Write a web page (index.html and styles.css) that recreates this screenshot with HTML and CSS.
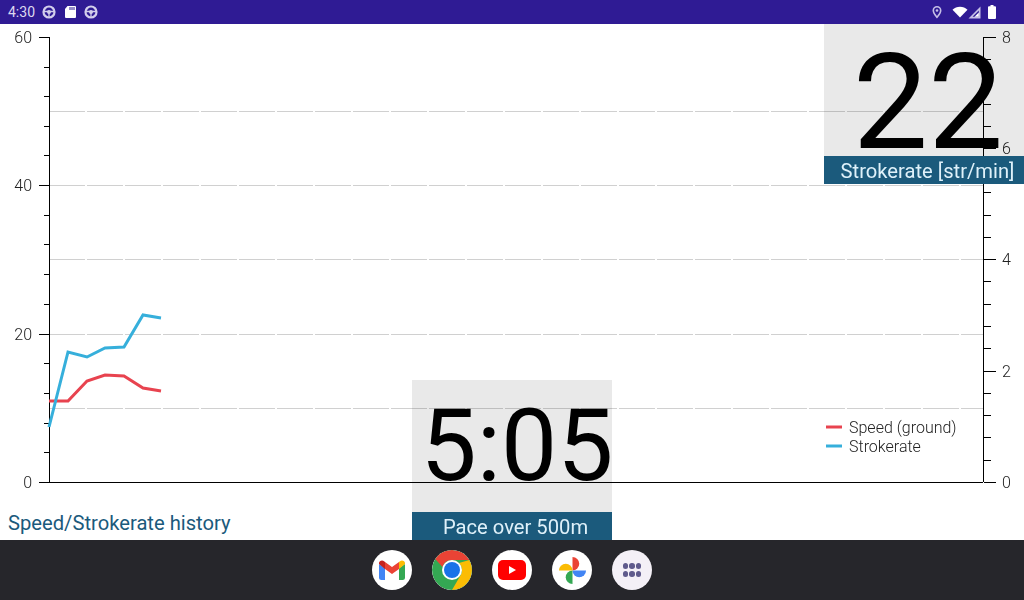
FILE: index.html
```html
<!DOCTYPE html>
<html lang="en">

<head>
	<meta charset="UTF-8">
	<title>Speed/Strokerate history</title>
	<link rel="stylesheet" href="styles.css">
</head>

<body>
	<div class="status">
		<div class="status-left">
			<span class="clock">4:30</span>
			<svg class="sicon" width="14" height="14" viewBox="0 0 14 14"><circle cx="7" cy="7" r="5.500" fill="none" stroke="#d3cfec" stroke-width="2.200"/><circle cx="7" cy="7" r="2" fill="#d3cfec"/><path d="M1 6.500h12M7 7v6" stroke="#d3cfec" stroke-width="1.300"/></svg>
			<svg class="sicon" width="14" height="14" viewBox="0 0 14 14"><path d="M4.500 1H12a1 1 0 0 1 1 1v10a1 1 0 0 1-1 1H3a1 1 0 0 1-1-1V4z" fill="#fff"/><path d="M7 2v3M9 2v3M11 2v3" stroke="#2f1b94" stroke-width="1"/></svg>
			<svg class="sicon" width="14" height="14" viewBox="0 0 14 14"><circle cx="7" cy="7" r="5.500" fill="none" stroke="#d3cfec" stroke-width="2.200"/><circle cx="7" cy="7" r="2" fill="#d3cfec"/><path d="M1 6.500h12M7 7v6" stroke="#d3cfec" stroke-width="1.300"/></svg>
		</div>
		<div class="status-right">
			<svg class="pin" width="10" height="14" viewBox="1 0 10 14"><path fill-rule="evenodd" d="M6 1a4.500 4.500 0 0 0-4.500 4.500C1.500 8.800 6 13.500 6 13.500s4.500-4.700 4.500-8A4.500 4.500 0 0 0 6 1zm0 1.600a2.900 2.900 0 0 1 2.900 2.900C8.900 7.300 7.100 9.700 6 11 4.900 9.700 3.100 7.300 3.100 5.500A2.900 2.900 0 0 1 6 2.600z" fill="#c5bfe6"/><circle cx="6" cy="5.500" r="1.300" fill="#c5bfe6"/></svg>
			<svg class="wifi" width="16" height="12" viewBox="0 0 15 12"><path d="M0 3.800C2 1.800 4.600 .7 7.500 .7s5.500 1.100 7.500 3.100L7.500 11.500z" fill="#fff"/></svg>
			<svg class="signal" width="13" height="13" viewBox="0 0 13 13"><path d="M12.500 .5v12H.5z" fill="#c5bfe6"/><path d="M10.800 4.600v6.200H4.600z" fill="#2f1b94"/><path d="M10.800 6.500v4.300H6.500z" fill="#fff"/></svg>
			<svg class="battery" width="8" height="14" viewBox="0 0 8 14"><path d="M2.500 0h3v1.300H7a1 1 0 0 1 1 1V13a1 1 0 0 1-1 1H1a1 1 0 0 1-1-1V2.300a1 1 0 0 1 1-1h1.500z" fill="#fff"/></svg>
		</div>
	</div>

	<div class="main">
		<svg class="chart" width="1024" height="476" viewBox="0 24 1024 476">
			<g class="grid">
				<path d="M49 111.500H983M49 185.500H983M49 259.500H983M49 334.500H983M49 408.500H983"/>
			</g>
			<g class="axis">
				<path d="M49.500 37V482M983.500 37V482M39 482.500H983"/>
				<!-- left axis, one tick per 4 units -->
				<path d="M39 37.500H49M44 67.500H49M44 96.500H49M44 126.500H49M44 155.500H49M39 185.500H49M44 215.500H49M44 244.500H49M44 274.500H49M44 304.500H49M39 334.500H49M44 363.500H49M44 393.500H49M44 423.500H49M44 452.500H49"/>
				<!-- right axis, one tick per 0.4 units -->
				<path d="M984 37.500H996M984 59.500H991M984 81.500H991M984 104.500H991M984 126.500H991M984 148.500H996M984 170.500H991M984 192.500H991M984 215.500H991M984 237.500H991M984 259.500H996M984 281.500H991M984 304.500H991M984 326.500H991M984 348.500H991M984 371.500H996M984 393.500H991M984 415.500H991M984 437.500H991M984 460.500H991M984 482.500H996"/>
			</g>
			<g class="ticks-left">
				<text x="32" y="43">60</text>
				<text x="32" y="191">40</text>
				<text x="32" y="340">20</text>
				<text x="32" y="488">0</text>
			</g>
			<g class="ticks-right">
				<text x="1002" y="43">8</text>
				<text x="1002" y="154">6</text>
				<text x="1002" y="265">4</text>
				<text x="1002" y="377">2</text>
				<text x="1002" y="488">0</text>
			</g>
			<polyline class="line-speed" points="49,401 68,401 87,381 105,375 124,376 143,388 161,391"/>
			<polyline class="line-rate" points="49,427 68,352 87,357 105,348 124,347 143,315 161,318"/>
			<path class="line-speed" d="M826 427H842"/>
			<path class="line-rate" d="M826 446H842"/>
			<text class="legend" x="849" y="433">Speed (ground)</text>
			<text class="legend" x="849" y="452">Strokerate</text>
		</svg>

		<div class="title">Speed/Strokerate history</div>

		<div class="tile tile-rate">
			<div class="value">22</div>
			<div class="label">Strokerate [str/min]</div>
		</div>
		<div class="tile tile-pace">
			<div class="value">5:05</div>
			<div class="label">Pace over 500m</div>
		</div>
	</div>

	<div class="nav">
		<div class="app">
			<svg width="26" height="20" viewBox="0 0 26 20"><path d="M0 4v13.500A2.500 2.500 0 0 0 2.500 20H6V8z" fill="#4285f4"/><path d="M20 8v12h3.500a2.500 2.500 0 0 0 2.500-2.500V4z" fill="#34a853"/><path d="M6 9 13 14l7-5V2l-7 5-7-5z" fill="#ea4335"/><path d="M20 2v7l6-5V3c0-2.600-3.700-3.200-5-1.800z" fill="#fbbc04"/><path d="M6 2v7L0 4V3c0-2.600 3.700-3.200 5-1.800z" fill="#c5221f"/></svg>
		</div>
		<div class="app">
			<svg class="round" width="40" height="40" viewBox="0 0 40 40"><circle cx="20" cy="20" r="20" fill="#34a853"/><path d="M20 0a20 20 0 0 1 17.300 10H20a10 10 0 0 0-9.500 7L3.200 9A20 20 0 0 1 20 0z" fill="#ea4335"/><path d="M37.300 10A20 20 0 0 1 20 40l8.700-15A10 10 0 0 0 27 13z" fill="#fbbc04"/><circle cx="20" cy="20" r="10" fill="#fff"/><circle cx="20" cy="20" r="8" fill="#1a73e8"/></svg>
		</div>
		<div class="app">
			<svg width="28" height="20" viewBox="0 0 28 20"><rect width="28" height="20" rx="5" fill="#f00"/><path d="M11 6v8l7-4z" fill="#fff"/></svg>
		</div>
		<div class="app">
			<svg width="29" height="29" viewBox="0 0 30 30"><path d="M15 15V1a7 7 0 0 1 0 14z" fill="#ea4335"/><path d="M15 15h14a7 7 0 0 1-14 0z" fill="#4285f4"/><path d="M15 15v14a7 7 0 0 1 0-14z" fill="#34a853"/><path d="M15 15H1a7 7 0 0 1 14 0z" fill="#fbbc04"/></svg>
		</div>
		<div class="app app-grid">
			<i></i><i></i><i></i><i></i><i></i><i></i>
		</div>
	</div>
</body>

</html>
```

FILE: styles.css
```css
body,
div {
	margin: 0;
	padding: 0;
}

body {
	width: 1024px;
	height: 600px;
	display: flex;
	flex-direction: column;
	overflow: hidden;
	background: #fff;
	font-family: Roboto, "Liberation Sans", sans-serif;
}

.status {
	height: 24px;
	display: flex;
	justify-content: space-between;
	align-items: center;
	padding: 0 28px 0 8px;
	background: #2f1b94;
	color: #dcd9ef;
	font-size: 14px;
}

.status-left,
.status-right {
	display: flex;
	align-items: center;
}

.status-left {
	gap: 7px;
}

.pin {
	margin-right: 10px;
}

.battery {
	margin-left: 7px;
}

.main {
	position: relative;
	flex: 1;
	display: flex;
	flex-direction: column;
}

.chart {
	display: block;
	will-change: transform;
}

.grid path {
	fill: none;
	stroke: #d0d0d0;
	stroke-width: 1;
	stroke-dasharray: 36 2;
}

.axis path {
	fill: none;
	stroke: #000;
	stroke-width: 1;
}

.ticks-left text,
.ticks-right text,
.legend {
	font-family: Roboto, sans-serif;
	font-weight: 300;
	font-size: 16px;
	fill: #222;
}

.ticks-left text {
	text-anchor: end;
}

.line-speed,
.line-rate {
	fill: none;
	stroke-width: 3;
}

.line-speed {
	stroke: #e8434f;
}

.line-rate {
	stroke: #36afdb;
}

.title {
	flex: 1;
	display: flex;
	align-items: center;
	padding: 6px 0 0 8px;
	color: #1b5a7c;
	font-size: 20.200px;
}

/* tiles sit over the chart, the axes show through the grey */
.tile {
	position: absolute;
	width: 200px;
	height: 160px;
	display: flex;
	flex-direction: column;
}

.tile-rate {
	top: 0;
	right: 0;
}

.tile-pace {
	bottom: 0;
	left: 412px;
}

.value {
	height: 132px;
	display: flex;
	justify-content: center;
	align-items: center;
	padding-left: 10px;
	box-sizing: border-box;
	background: rgba(0, 0, 0, 0.085);
	color: #000;
	line-height: 100px;
}

.tile-rate .value {
	padding-top: 26px;
	padding-left: 8px;
	font-size: 134px;
}

.tile-pace .value {
	font-size: 100px;
}

.label {
	height: 28px;
	display: flex;
	justify-content: center;
	align-items: center;
	padding: 2px 0 0 7px;
	box-sizing: border-box;
	background: #1b5a7c;
	color: #dff1fa;
	font-size: 20.200px;
}

.nav {
	height: 60px;
	display: flex;
	justify-content: center;
	align-items: center;
	gap: 20px;
	background: #26262b;
}

.app {
	width: 40px;
	height: 40px;
	display: flex;
	justify-content: center;
	align-items: center;
	border-radius: 50%;
	background: #fff;
	overflow: hidden;
}

.app-grid {
	display: grid;
	grid-template-columns: repeat(3, 5.500px);
	gap: 2.500px 1px;
	align-content: center;
	justify-content: center;
	background: #f4f0f7;
}

.app-grid i {
	width: 5.500px;
	height: 5.500px;
	border-radius: 50%;
	background: #5f5a8c;
}
```
